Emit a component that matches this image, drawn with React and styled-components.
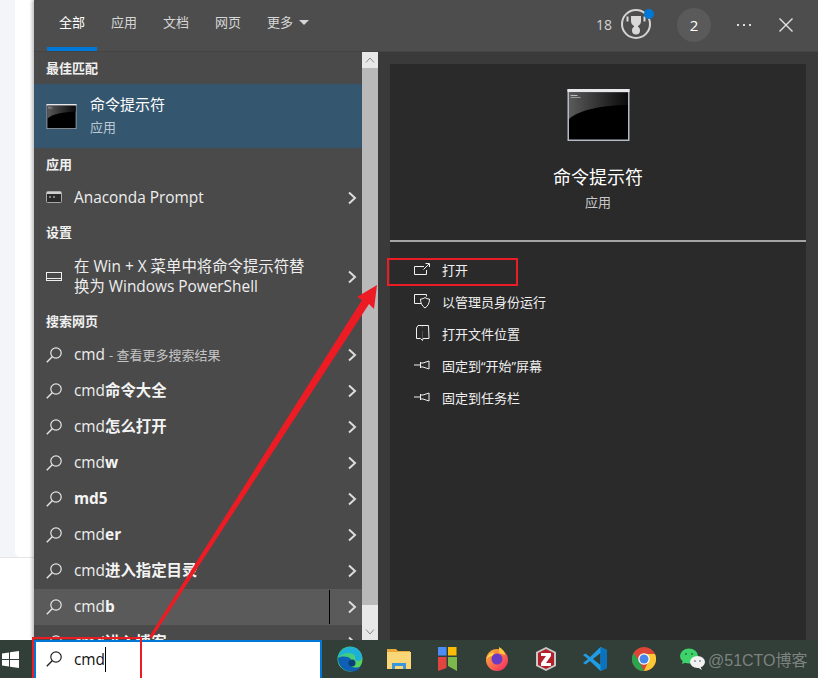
import React from "react";
import styled, { createGlobalStyle } from "styled-components";

const Global = createGlobalStyle`
  html, body { margin: 0; padding: 0; background: #fff; }
  body { font-family: "Open Sans", "Noto Sans CJK SC", sans-serif; }
  * { box-sizing: border-box; }
`;
const Page = styled.div`
  position: relative; width: 818px; height: 678px; overflow: hidden;
  display: flex; flex-direction: column; background: #fff;
`;
const Upper = styled.div`display: flex; height: 640px;`;
const Backdrop = styled.div`width: 34px; height: 100%; background: #fff;`;
const BackdropTop = styled.div`
  height: 558px; background: #f3f5f8; border-bottom: 1px solid #e6e6e6; padding-left: 15px;
`;
const BackdropCard = styled.div`height: 557px; background: #fff; border-bottom-left-radius: 5px;`;
const Panel = styled.div`
  flex: 1; display: flex; flex-direction: column; background: #3a3a3a;
  box-shadow: -2px 0 3px rgba(0,0,0,.25);
`;
const Header = styled.div`
  height: 52px; display: flex; justify-content: space-between; align-items: flex-start;
  padding-left: 13px; background: #4d4d4d; border-bottom: 1px solid #444;
`;
const Tabs = styled.div`display: flex; gap: 2px;`;
const Tab = styled.div`
  height: 51px; padding: 0 12px 4px; display: flex; align-items: center; gap: 6px;
  font-size: 13px; color: ${p => p.$active ? "#fff" : "#d6d6d6"};
  border-bottom: 4px solid ${p => p.$active ? "#0078d7" : "transparent"};
`;
const Caret = styled.span`
  width: 0; height: 0; border-left: 5px solid transparent; border-right: 5px solid transparent;
  border-top: 5px solid #d6d6d6; margin-top: 2px;
`;
const HeaderRight = styled.div`display: flex; align-items: center; height: 50px; padding-right: 25px;`;
const Score = styled.span`font-size: 14px; color: #d4d4d4; margin-right: 9px; margin-top: -2px;`;
const Trophy = styled.div`position: relative; width: 30px; height: 30px; margin-right: 26px; margin-top: -2px;`;
const Dot = styled.span`
  position: absolute; right: -3px; top: 0; width: 10px; height: 10px; border-radius: 50%; background: #0078d7;
`;
const Avatar = styled.div`
  width: 34px; height: 34px; border-radius: 50%; background: #5a5a5a; color: #fff;
  display: flex; align-items: center; justify-content: center; font-size: 15px; margin-right: 26px;
`;
const More = styled.span`
  width: 14px; display: flex; justify-content: space-between; margin-right: 28px;
  i { width: 2px; height: 2px; background: #ddd; display: block; }
`;
const Body = styled.div`flex: 1; display: flex; min-height: 0;`;
const List = styled.div`width: 328px; height: 588px; overflow: hidden; background: #4a4a4a;`;
const Label = styled.div`
  height: 32px; display: flex; align-items: center; padding: 0 0 2px 12px;
  font-size: 13px; font-weight: 700; color: #f0f0f0;
`;
const BestMatch = styled.div`
  height: 64px; background: #34566f; display: flex; align-items: center; padding-left: 12px; gap: 13px;
`;
const BestText = styled.div`display: flex; flex-direction: column; gap: 3px;`;
const BestTitle = styled.span`font-size: 15px; line-height: 21px; color: #fff; margin-top: -2px;`;
const BestSub = styled.span`font-size: 13px; line-height: 18px; color: #b9c8d3;`;
const Row = styled.div`
  height: ${p => p.$h || 36}px; display: flex; align-items: center; padding: 0 5px 0 12px;
  background: ${p => p.$hover ? "#5a5a5a" : "transparent"}; position: relative;
`;
const RowIcon = styled.span`width: 16px; height: 16px; margin-right: 12px; display: flex; flex: none;`;
const RowText = styled.div`flex: 1; font-size: 15.4px; line-height: 20px; color: #eee; white-space: nowrap;`;
const Muted = styled.span`font-size: 13px; color: #c4c4c4;`;
const Strong = styled.b`font-weight: 700; color: #f4f4f4;`;
const Cursor = styled.span`width: 1px; height: 34px; background: #000; margin-right: 17px;`;
const Scrollbar = styled.div`width: 16px; height: 588px; display: flex; flex-direction: column; background: #b9b9b9;`;
const ScrollBtn = styled.div`
  height: ${p => p.$h}px; background: #e8e8e8; display: flex; justify-content: center; align-items: ${p => p.$end ? "flex-end" : "center"};
  padding-bottom: ${p => p.$end ? 5 : 0}px;
`;
const ScrollThumb = styled.div`flex: 1;`;
const Detail = styled.div`flex: 1; padding: 12px 12px 0; background: #3a3a3a;`;
const DetailPane = styled.div`height: 576px; background: #2a2a2a; display: flex; flex-direction: column;`;
const Hero = styled.div`
  height: 178px; padding-top: 25px; display: flex; flex-direction: column; align-items: center;
  border-bottom: 2px solid #a5a5a5;
`;
const HeroTitle = styled.div`font-size: 18px; line-height: 26px; color: #fff; margin-top: 23px;`;
const HeroSub = styled.div`font-size: 13px; line-height: 18px; color: #c8c8c8; margin-top: 3px;`;
const Actions = styled.div`padding: 11px 0 0 24px; display: flex; flex-direction: column;`;
const Action = styled.div`
  height: 32px; display: flex; align-items: center; gap: 12px; font-size: 13px; color: #f0f0f0;
`;
const ActionIcon = styled.span`width: 16px; height: 18px; display: flex; align-items: center; flex: none;`;
const Taskbar = styled.div`
  height: 38px; display: flex; align-items: stretch; position: relative; background: #323f38;
`;
const Start = styled.div`width: 34px; padding-left: 2px; display: flex; align-items: center;`;
const SearchBox = styled.div`
  width: 288px; background: #fff; border: 2px solid #0078d7; border-bottom: 0; display: flex; align-items: center;
  padding: 0 0 2px 10px; gap: 12px; margin-right: 3px;
`;
const SearchText = styled.span`font-size: 15.4px; color: #111; display: flex; align-items: center;`;
const Caretline = styled.i`display: inline-block; width: 1px; height: 25px; background: #000;`;
const TrayIcon = styled.div`width: 49px; display: flex; align-items: center; justify-content: center;`;
const Watermark = styled.span`
  font-family: "Liberation Sans", "Noto Sans CJK SC", sans-serif; font-size: 16px; color: rgba(190,190,190,.55);
  align-self: center; margin-left: -9px; white-space: nowrap;
`;
const Annotation = styled.div`
  position: absolute; border: 2px solid #ed1c24; pointer-events: none;
  left: ${p => p.$x}px; top: ${p => p.$y}px; width: ${p => p.$w}px; height: ${p => p.$h}px;
`;
const ArrowLayer = styled.svg`position: absolute; left: 0; top: 0; pointer-events: none;`;

const Magnifier = ({ color = "#e6e6e6" }) => (
  <svg width="16" height="16" viewBox="0 0 16 16" fill="none" stroke={color} strokeWidth="1.2">
    <circle cx="10" cy="6" r="5.2" /><path d="M6.2 9.8 L0.8 15.3" strokeWidth="1.4" />
  </svg>
);
const Chevron = () => (
  <svg width="10" height="14" viewBox="0 0 10 14" fill="none" stroke="#dcdcdc" strokeWidth="2"><path d="M2 1.5 L8 7 L2 12.5" /></svg>
);
const ScrollChevron = ({ up }) => (
  <svg width="10" height="6" viewBox="0 0 10 6" fill="none" stroke="#8a8a8a" strokeWidth="1"><path d={up ? "M1 5.5 L5 1 L9 5.5" : "M1 .5 L5 5 L9 .5"} /></svg>
);
const CmdIcon = ({ w, h, id }) => (
  <svg width={w} height={h} viewBox="0 0 62 52" style={{ flex: "none" }}>
    <defs><linearGradient id={id} x1="0" x2="1" y1="0" y2="0"><stop offset="0" stopColor="#5a5a5a" /><stop offset="1" stopColor="#0a0a0a" /></linearGradient></defs>
    <rect width="62" height="52" fill="#b4bac4" />
    <rect y="0" width="62" height="3" fill="#e8e8ea" />
    <rect x="1.5" y="3.5" width="59" height="47" fill="#000" />
    <path d="M1.5 3.5 H60.5 V16 C35 16 12 21 1.5 30 Z" fill={`url(#${id})`} />
    <rect x="3" y="6" width="7" height="1" fill="#bbb" /><rect x="3" y="8" width="10" height="1" fill="#999" />
  </svg>
);
const ConsoleIcon = () => (
  <svg width="16" height="16" viewBox="0 0 16 16"><rect x=".5" y="1.5" width="15" height="11" rx="1" fill="#2a2a2a" stroke="#aaa" /><rect x="1" y="2" width="14" height="2" fill="#cfcfcf" /><path d="M3 7h2M7 7h2" stroke="#ddd" /></svg>
);
const MonitorIcon = () => (
  <svg width="16" height="16" viewBox="0 0 16 16" fill="none" stroke="#eee"><rect x=".5" y="3.5" width="15" height="8" /><path d="M.5 9.5h15" /></svg>
);
const stroke = { fill: "none", stroke: "#f0f0f0", strokeWidth: 1 };
const OpenIcon = () => <svg width="16" height="12" viewBox="0 0 16 12" {...stroke}><path d="M10 3.5H.5v8h12V7" /><path d="M9.500 6.500L15 1M11.500.5H15.500V4" /></svg>;
const ShieldIcon = () => <svg width="16" height="15" viewBox="0 0 16 15" {...stroke}><path d="M7 9.500H.5v-9h12v2" /><path d="M6.500 5c2 0 3-.5 4.500-1.500 1.500 1 2.500 1.500 4.500 1.500 0 4-1.500 7-4.500 9-3-2-4.500-5-4.500-9z" /></svg>;
const FolderIcon = () => <svg width="16" height="16" viewBox="0 0 16 16" {...stroke}><path d="M4 .5h10.500l.5 13H9l-.5 2-2-2h-4V3z" /><path d="M8.500.5v2M8.500 13.500V6" strokeOpacity=".2" /></svg>;
const PinIcon = () => <svg width="16" height="12" viewBox="0 0 16 12" {...stroke}><path d="M0 6h6.500M6.500 3v6M6.500 4H9l6-2v8L9 8H6.500" /></svg>;
const Win = () => <svg width="17" height="17" viewBox="0 0 17 17" fill="#fff"><path d="M0 2.500l7-1v6.500H0zM8 1.300L17 0v8H8zM0 9h7v6.500l-7-1zM8 9h9v8l-9-1.300z" /></svg>;
const Edge = () => (
  <svg width="26" height="26" viewBox="0 0 26 26">
    <defs><linearGradient id="eg" x1="0" y1="0" x2="1" y2="1"><stop offset="0" stopColor="#2ec6a0" /><stop offset="1" stopColor="#62d84e" /></linearGradient></defs>
    <circle cx="13" cy="13" r="12.500" fill="url(#eg)" />
    <path d="M1 12C1 20 7 25.500 14 25.500c5 0 8-2 10-5-3 1.500-8 1.500-10-.5-2-2-2-5 0-7-4-3-9-3-13-1z" fill="#0f5fb4" />
    <path d="M1 11c2-7 8-10 13-10 6 0 11 5 11 10 0 3-2 4-4 4s-3-1-3-2c1-3-2-6-6-6-5 0-9 2-11 4z" fill="#1fb0d8" />
    <circle cx="15" cy="17" r="3.500" fill="#0a3f7a" />
  </svg>
);
const Folder = () => (
  <svg width="24" height="22" viewBox="0 0 24 22"><path d="M0 1h9l2 2h12v3H0z" fill="#e6a93a" /><rect y="4" width="24" height="17" fill="#f9d776" /><path d="M5 21v-6h14v6h-3v-3H8v3z" fill="#3a96dd" /></svg>
);
const Marks = () => (
  <svg width="20" height="24" viewBox="0 0 20 24"><rect width="8.500" height="8.500" fill="#4b8df5" /><rect x="10" width="8.500" height="8.500" fill="#fbbc05" /><path d="M0 10h8.500v11L0 24z" fill="#e0463e" /><path d="M10 10h9v14l-9-5z" fill="#7cb84a" /></svg>
);
const Fox = () => (
  <svg width="24" height="24" viewBox="0 0 24 24">
    <defs><linearGradient id="fx" x1="0" y1="0" x2="1" y2="1"><stop offset="0" stopColor="#ffbd2e" /><stop offset="1" stopColor="#f5206a" /></linearGradient></defs>
    <circle cx="12" cy="13" r="11" fill="url(#fx)" /><path d="M14 0c4 2 6 5 6 8l-6-2z" fill="#ffc83a" /><circle cx="12" cy="12" r="5.500" fill="#6b3bc4" /><path d="M1 12c2-4 6-7 8-6l-2 3c-2 0-4 1-6 3z" fill="#ffdb4d" />
  </svg>
);
const ZIcon = () => (
  <svg width="22" height="24" viewBox="0 0 22 24"><path d="M11 0l10 5v14l-10 5L1 19V5z" fill="#c9c9c9" /><path d="M11 2l8 4v12l-8 4-8-4V6z" fill="#b3202a" /><path d="M6 6h10v3l-5 7h5v3H6v-3l5-7H6z" fill="#fff" /></svg>
);
const VS = () => (
  <svg width="24" height="24" viewBox="0 0 24 24"><path d="M17.500 0L24 3v18l-6.500 3L7 14l-4.500 3.500L0 16l5-4L0 8l2.500-1.500L7 10z" fill="#1f9ce4" /><path d="M17.500 6v12L10 12z" fill="#2f3f38" /><path d="M17.500 0L24 3v18l-6.500 3z" fill="#0b73bd" /></svg>
);
const Chrome = () => (
  <svg width="24" height="24" viewBox="0 0 24 24"><circle cx="12" cy="12" r="12" fill="#dd4537" /><path d="M12 24A12 12 0 0 1 1.600 6L7 14l5 10z" fill="#2aa44f" /><path d="M12 24A12 12 0 0 0 23 7H12l4 8z" fill="#fcc934" /><circle cx="12" cy="12" r="5.800" fill="#fff" /><circle cx="12" cy="12" r="4.500" fill="#4a86e8" /></svg>
);
const WeChat = () => (
  <svg width="25" height="22" viewBox="0 0 25 22"><ellipse cx="9" cy="8" rx="9" ry="7.500" fill="#3dd36a" /><path d="M3 12l-1 4 5-2z" fill="#3dd36a" /><ellipse cx="17.500" cy="14" rx="7.500" ry="6" fill="#f2f2f2" /><path d="M20 18l2 4-5-3z" fill="#f2f2f2" /><circle cx="6" cy="6" r="1" fill="#1a7a3a" /><circle cx="12" cy="6" r="1" fill="#1a7a3a" /><circle cx="15" cy="13" r=".9" fill="#888" /><circle cx="20" cy="13" r=".9" fill="#888" /></svg>
);
const TrophyIcon = () => (
  <svg width="30" height="30" viewBox="0 0 30 30">
    <circle cx="15" cy="15" r="14" fill="none" stroke="#d4d4d4" strokeWidth="2" />
    <path d="M10 7h10v5c0 2-1 4-3 5v2h-4v-2c-2-1-3-3-3-5z" fill="#d8d8d8" />
    <path d="M6.500 7.500v5M23.500 7.500v5" stroke="#d8d8d8" strokeWidth="2" />
    <circle cx="15" cy="21.500" r="4" fill="#d8d8d8" />
  </svg>
);

const searches = [
  <>cmd <Muted>- 查看更多搜索结果</Muted></>,
  <>cmd<Strong>命令大全</Strong></>,
  <>cmd<Strong>怎么打开</Strong></>,
  <>cmd<Strong>w</Strong></>,
  <Strong>md5</Strong>,
  <>cmd<Strong>er</Strong></>,
  <>cmd<Strong>进入指定目录</Strong></>,
  <>cmd<Strong>b</Strong></>,
  <>cmd<Strong>进入博客</Strong></>,
];
const actions = [
  [OpenIcon, "打开"], [ShieldIcon, "以管理员身份运行"], [FolderIcon, "打开文件位置"],
  [PinIcon, "固定到“开始”屏幕"], [PinIcon, "固定到任务栏"],
];

export default function App() {
  return (
    <Page>
      <Global />
      <Upper>
        <Backdrop><BackdropTop><BackdropCard /></BackdropTop></Backdrop>
        <Panel>
          <Header>
            <Tabs>
              <Tab $active>全部</Tab><Tab>应用</Tab><Tab>文档</Tab><Tab>网页</Tab><Tab>更多<Caret /></Tab>
            </Tabs>
            <HeaderRight>
              <Score>18</Score>
              <Trophy><TrophyIcon /><Dot /></Trophy>
              <Avatar>2</Avatar>
              <More><i /><i /><i /></More>
              <svg width="14" height="14" viewBox="0 0 14 14" stroke="#e4e4e4" strokeWidth="1.400"><path d="M.5.5l13 13M13.500.5l-13 13" /></svg>
            </HeaderRight>
          </Header>
          <Body>
            <List>
              <Label>最佳匹配</Label>
              <BestMatch>
                <CmdIcon w={31} h={25} id="cmdSmall" />
                <BestText><BestTitle>命令提示符</BestTitle><BestSub>应用</BestSub></BestText>
              </BestMatch>
              <Label>应用</Label>
              <Row><RowIcon><ConsoleIcon /></RowIcon><RowText>Anaconda Prompt</RowText><Chevron /></Row>
              <Label>设置</Label>
              <Row $h={57}><RowIcon><MonitorIcon /></RowIcon><RowText>在 Win + X 菜单中将命令提示符替<br />换为 Windows PowerShell</RowText><Chevron /></Row>
              <Label>搜索网页</Label>
              {searches.map((s, i) => (
                <Row key={i} $hover={i === 7}>
                  <RowIcon><Magnifier /></RowIcon><RowText>{s}</RowText>
                  {i === 7 && <Cursor />}
                  <Chevron />
                </Row>
              ))}
            </List>
            <Scrollbar>
              <ScrollBtn $h={16}><ScrollChevron up /></ScrollBtn>
              <ScrollThumb />
              <ScrollBtn $h={35} $end><ScrollChevron /></ScrollBtn>
            </Scrollbar>
            <Detail>
              <DetailPane>
                <Hero>
                  <CmdIcon w={63} h={52} id="cmdBig" />
                  <HeroTitle>命令提示符</HeroTitle>
                  <HeroSub>应用</HeroSub>
                </Hero>
                <Actions>
                  {actions.map(([Ic, t]) => <Action key={t}><ActionIcon><Ic /></ActionIcon>{t}</Action>)}
                </Actions>
              </DetailPane>
            </Detail>
          </Body>
        </Panel>
      </Upper>
      <Taskbar>
        <Start><Win /></Start>
        <SearchBox>
          <Magnifier color="#222" />
          <SearchText>cmd<Caretline /></SearchText>
        </SearchBox>
        <TrayIcon><Edge /></TrayIcon>
        <TrayIcon><Folder /></TrayIcon>
        <TrayIcon><Marks /></TrayIcon>
        <TrayIcon><Fox /></TrayIcon>
        <TrayIcon><ZIcon /></TrayIcon>
        <TrayIcon><VS /></TrayIcon>
        <TrayIcon><Chrome /></TrayIcon>
        <TrayIcon><WeChat /></TrayIcon>
        <Watermark>@51CTO博客</Watermark>
      </Taskbar>
      <Annotation $x={387} $y={258} $w={131} $h={28} />
      <Annotation $x={32} $y={637} $w={110} $h={50} />
      <ArrowLayer width="818" height="678" viewBox="0 0 818 678">
        <path d="M149 637 L362 300 L357 297 L377 285 L374 309 L369 304 L152 638 Z" fill="#ed1c24" />
      </ArrowLayer>
    </Page>
  );
}
